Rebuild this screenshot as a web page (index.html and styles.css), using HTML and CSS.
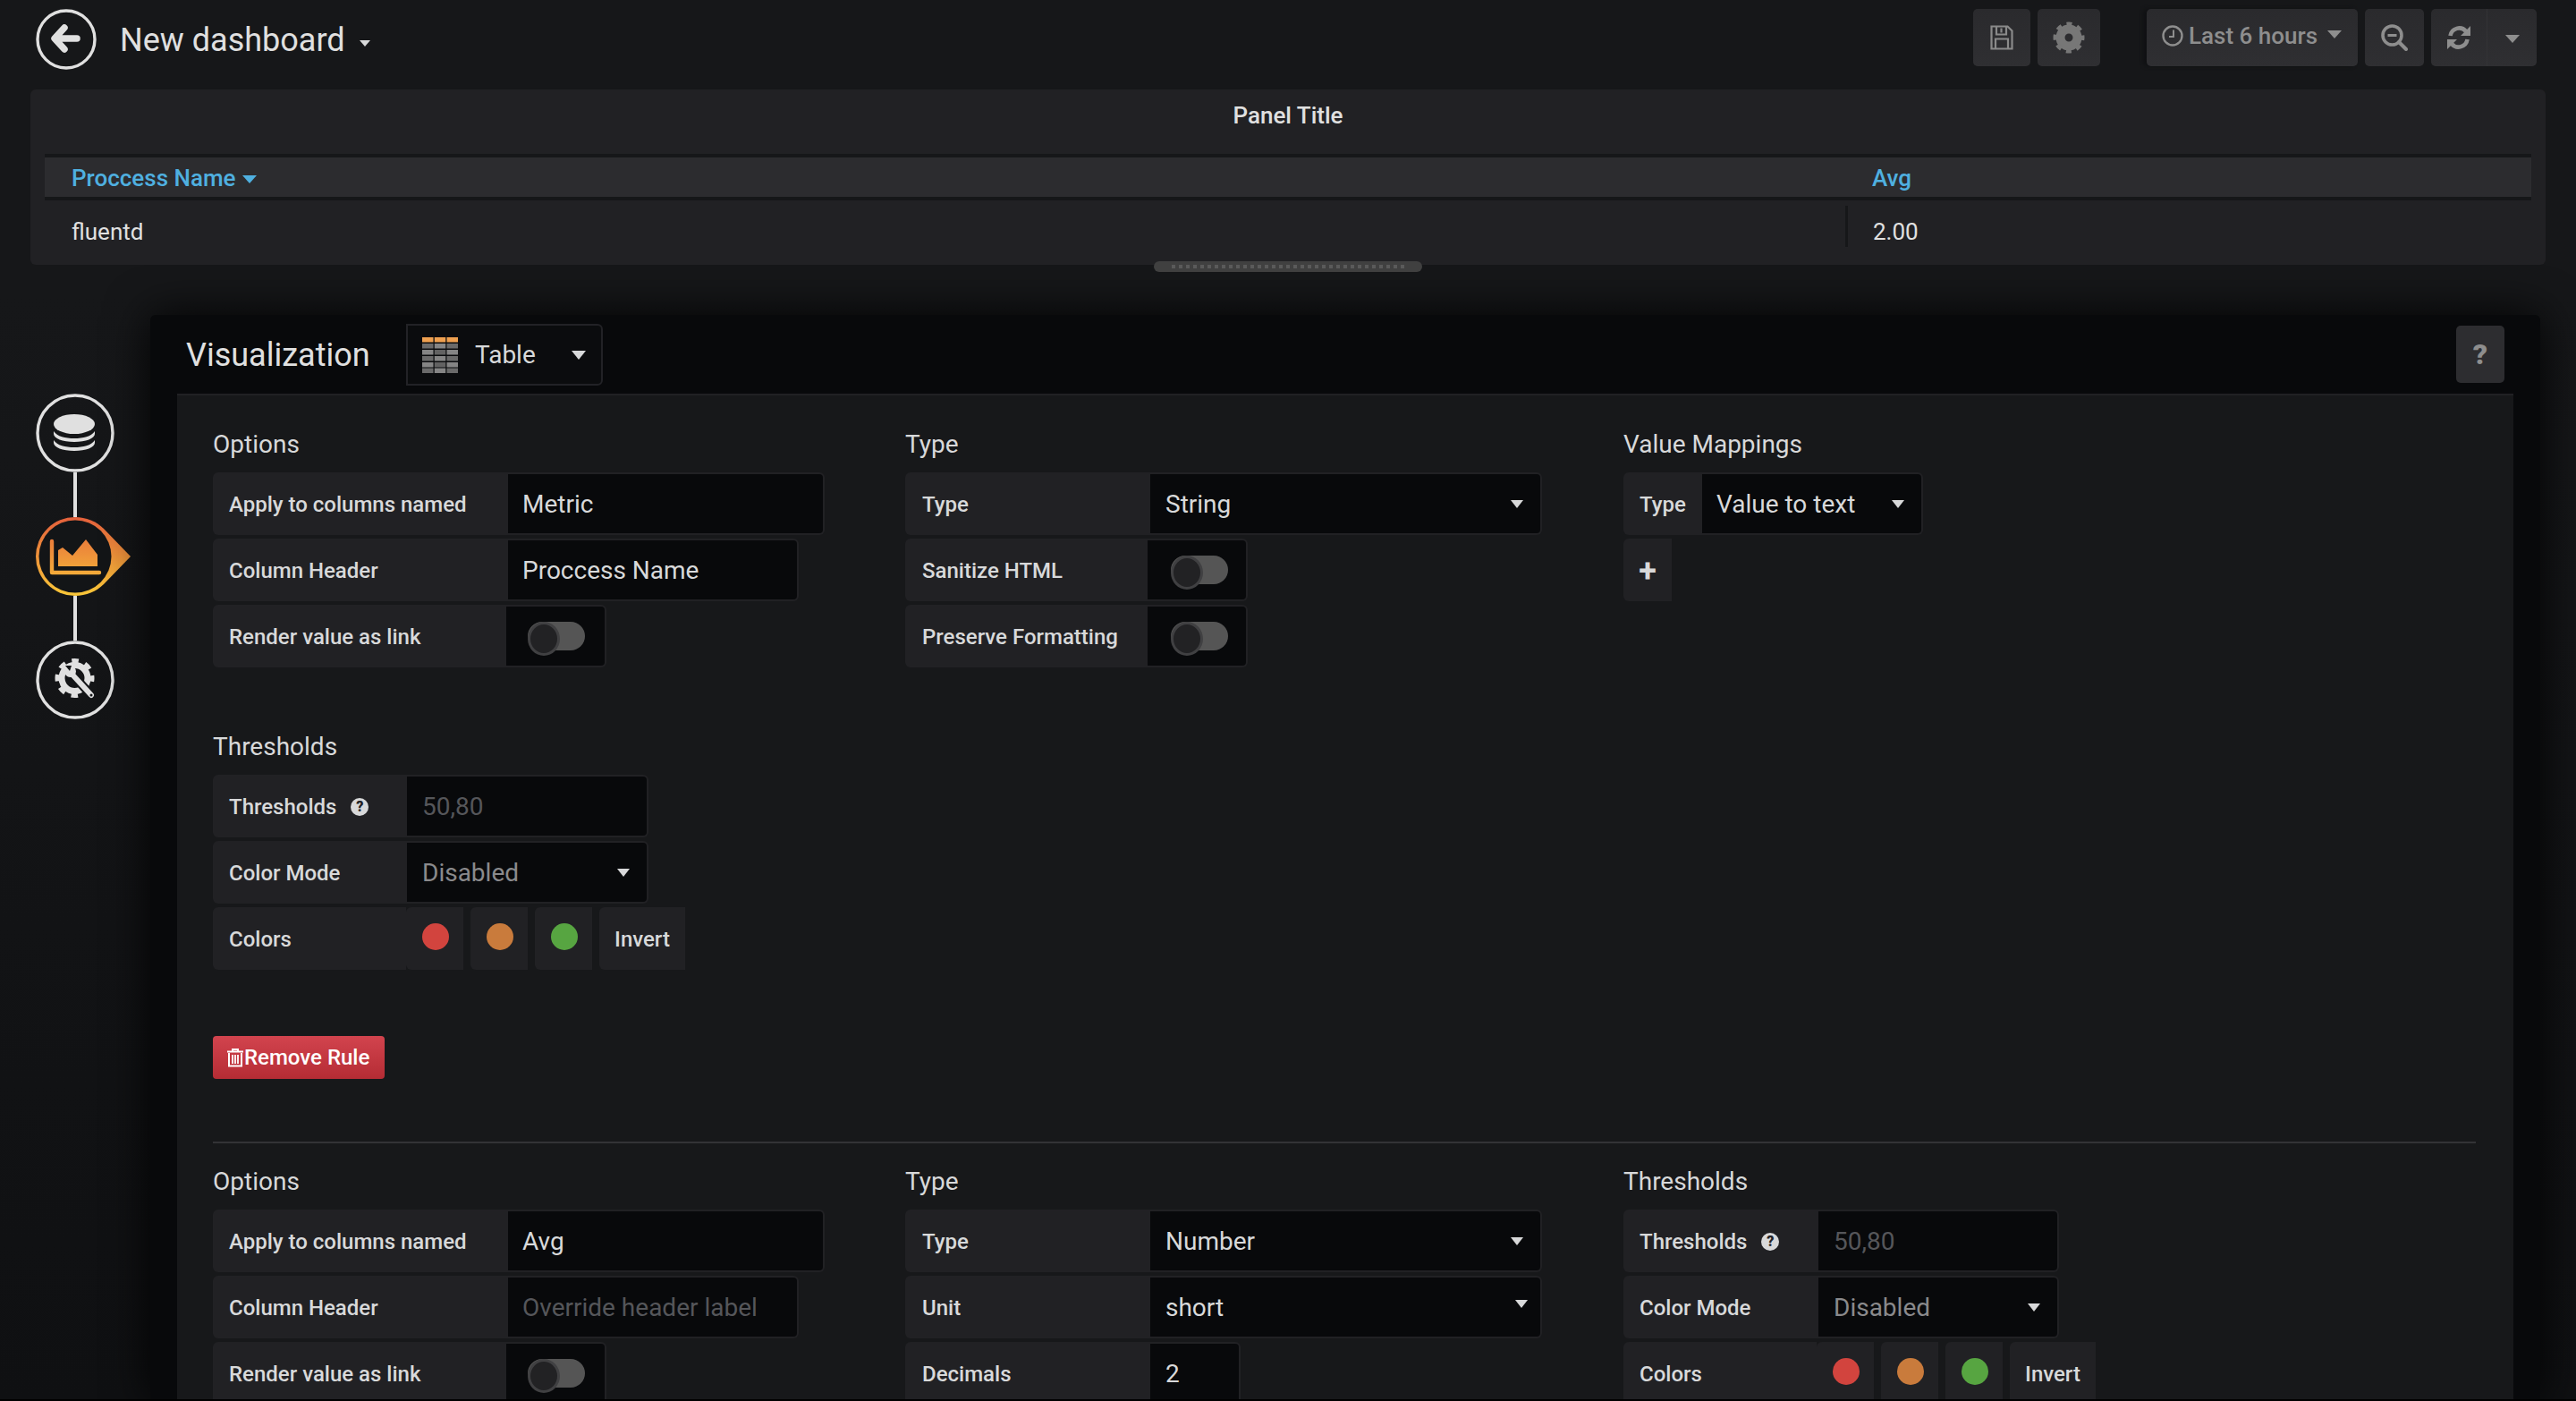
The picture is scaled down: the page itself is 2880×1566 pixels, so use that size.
FILE: index.html
```html
<!DOCTYPE html>
<html lang="en">
<head>
<meta charset="utf-8">
<title>New dashboard</title>
<link rel="stylesheet" href="styles.css">
</head>
<body>
<div class="app">
  <header class="nav">
    <svg class="back" viewBox="0 0 68 68"><circle cx="34" cy="34" r="32" fill="none" stroke="#e0e0e0" stroke-width="3.4"/><path d="M46 33H24M32 21 21 33l11 12" fill="none" stroke="#e0e0e0" stroke-width="7.5" stroke-linecap="round" stroke-linejoin="round"/></svg>
    <div class="dash-title">New dashboard</div>
    <i class="caret caret-title"></i>
    <div class="toolbar">
      <button class="tb tb-save"><svg width="26" height="28" viewBox="0 0 26 28"><path d="M1.5 1.5h18l5 5v20h-23zM7 1.5v9h11v-9M12.5 3.500v5M6 26.500v-11h14v11" fill="none" stroke="#8a8a8a" stroke-width="2.200"/></svg></button>
      <button class="tb tb-gear"><svg width="36" height="36" viewBox="0 0 36 36"><circle cx="18" cy="18" r="9.500" fill="none" stroke="#777" stroke-width="10"/><circle cx="18" cy="18" r="15" fill="none" stroke="#777" stroke-width="5" stroke-dasharray="5.890 5.890" stroke-dashoffset="2.945"/></svg></button>
      <button class="tb tb-time"><svg width="24" height="24" viewBox="0 0 24 24"><circle cx="12" cy="12" r="10.500" fill="none" stroke="#8e8e8e" stroke-width="2.400"/><path d="M13 5.500V13H8" fill="none" stroke="#8e8e8e" stroke-width="2"/></svg><span>Last 6 hours</span><i class="caret caret-time"></i></button>
      <button class="tb tb-zoom"><svg width="30" height="30" viewBox="0 0 30 30"><circle cx="12.500" cy="12.500" r="10.500" fill="none" stroke="#8e8e8e" stroke-width="3.600"/><path d="M20 20l8 8" stroke="#8e8e8e" stroke-width="4" stroke-linecap="round"/><path d="M7.500 12.500h10" stroke="#8e8e8e" stroke-width="3"/></svg></button>
      <div class="tb-group">
        <button class="tb-part tb-refresh"><svg width="28" height="28" viewBox="0 0 28 28"><path d="M4.500 12A10 10 0 0 1 22 7M23.500 16A10 10 0 0 1 6 21" fill="none" stroke="#8e8e8e" stroke-width="4.600"/><path d="M27 1v11H16zM1 27V16h11z" fill="#8e8e8e"/></svg></button>
        <button class="tb-part tb-more"><i class="caret caret-more"></i></button>
      </div>
    </div>
  </header>

  <section class="panel">
    <div class="panel-title">Panel Title</div>
    <div class="tbl">
      <div class="tbl-head">
        <div class="th th-first">Proccess Name<i class="caret caret-sort"></i></div>
        <div class="th">Avg</div>
      </div>
      <div class="tbl-row">
        <div class="td td-first">fluentd</div>
        <div class="td td-val">2.00</div>
      </div>
    </div>
    <div class="handle"><div class="handle-dots"></div></div>
  </section>

  <main class="editor">
    <nav class="steps">
      <svg class="step" width="88" height="88" viewBox="0 0 88 88"><circle cx="44" cy="44" r="42" fill="none" stroke="#e0e0e0" stroke-width="3.400"/><ellipse cx="43" cy="34" rx="23" ry="11" fill="#e0e0e0"/><path d="M20 42c4 6 13 8 23 8s19-2 23-8v3c0 5-10 9-23 9s-23-4-23-9z" fill="#e0e0e0"/><path d="M20 52c4 6 13 8 23 8s19-2 23-8v3c0 5-10 9-23 9s-23-4-23-9z" fill="#e0e0e0"/></svg>
      <div class="link"></div>
      <svg class="step" width="108" height="88" viewBox="0 0 108 88"><defs><linearGradient id="og" gradientUnits="userSpaceOnUse" x1="0" y1="0" x2="0" y2="88"><stop offset="0" stop-color="#e4603c"/><stop offset="1" stop-color="#f9c738"/></linearGradient></defs><path d="M44 0c12 0 24 5 32 13l30 31-30 31c-8 8-20 13-32 13a44 44 0 0 1 0-88z" fill="url(#og)"/><circle cx="44" cy="44" r="40.500" fill="#131517"/><path d="M18 27v35h53" fill="none" stroke="url(#og)" stroke-width="4.400" stroke-linecap="round" stroke-linejoin="round"/><path d="M25 37l5-3 11 9 15-18 13 17v13H25z" fill="url(#og)"/></svg>
      <div class="link"></div>
      <svg class="step" width="88" height="88" viewBox="0 0 88 88"><circle cx="44" cy="44" r="42" fill="none" stroke="#e0e0e0" stroke-width="3.400"/><circle cx="43.500" cy="42" r="14.500" fill="none" stroke="#e0e0e0" stroke-width="7"/><circle cx="43.500" cy="42" r="19.500" fill="none" stroke="#e0e0e0" stroke-width="5" stroke-dasharray="7.650 7.660" stroke-dashoffset="3.830"/><path d="M40 37l22 24" stroke="#131517" stroke-width="10" stroke-linecap="round"/><path d="M40 37l22 24" stroke="#e0e0e0" stroke-width="6" stroke-linecap="round"/><circle cx="38.500" cy="34.500" r="6.500" fill="#e0e0e0"/><path d="M38 34l-5-6h7z" fill="#131517"/><circle cx="62" cy="61" r="1.500" fill="#131517"/></svg>
    </nav>

    <div class="viz">
      <div class="viz-head">
        <h1 class="viz-title">Visualization</h1>
        <button class="viz-picker">
          <svg width="40" height="40" viewBox="0 0 40 40">
            <rect width="12.500" height="5.500" fill="#eea050"/><rect x="13.750" width="12.500" height="5.500" fill="#eea050"/><rect x="27.500" width="12.500" height="5.500" fill="#eea050"/>
            <rect y="7" width="12.500" height="5.500" fill="#6a6a6a"/><rect x="13.750" y="7" width="12.500" height="5.500" fill="#858585"/><rect x="27.500" y="7" width="12.500" height="5.500" fill="#6a6a6a"/>
            <rect y="14" width="12.500" height="5.500" fill="#858585"/><rect x="13.750" y="14" width="12.500" height="5.500" fill="#626262"/><rect x="27.500" y="14" width="12.500" height="5.500" fill="#858585"/>
            <rect y="21" width="12.500" height="5.500" fill="#6a6a6a"/><rect x="13.750" y="21" width="12.500" height="5.500" fill="#858585"/><rect x="27.500" y="21" width="12.500" height="5.500" fill="#6a6a6a"/>
            <rect y="28" width="12.500" height="5.500" fill="#858585"/><rect x="13.750" y="28" width="12.500" height="5.500" fill="#626262"/><rect x="27.500" y="28" width="12.500" height="5.500" fill="#858585"/>
            <rect y="34.500" width="12.500" height="5.500" fill="#6a6a6a"/><rect x="13.750" y="34.500" width="12.500" height="5.500" fill="#858585"/><rect x="27.500" y="34.500" width="12.500" height="5.500" fill="#6a6a6a"/>
          </svg>
          <span>Table</span><i class="caret caret-picker"></i>
        </button>
        <button class="help">?</button>
      </div>

      <div class="viz-body">
        <div class="rule rule-one">
          <div class="col col-a">
            <h2 class="sec">Options</h2>
            <div class="field"><div class="label w-330">Apply to columns named</div><div class="input w-354">Metric</div></div>
            <div class="field"><div class="label w-330">Column Header</div><div class="input w-325">Proccess Name</div></div>
            <div class="field"><div class="label w-328">Render value as link</div><div class="switch-box"><div class="switch"></div></div></div>
          </div>
          <div class="col col-b">
            <h2 class="sec">Type</h2>
            <div class="field"><div class="label w-274">Type</div><div class="input w-438 select">String<i class="caret"></i></div></div>
            <div class="field"><div class="label w-271">Sanitize HTML</div><div class="switch-box"><div class="switch"></div></div></div>
            <div class="field"><div class="label w-271">Preserve Formatting</div><div class="switch-box"><div class="switch"></div></div></div>
          </div>
          <div class="col col-c">
            <h2 class="sec">Value Mappings</h2>
            <div class="field"><div class="label w-88">Type</div><div class="input w-247 select">Value to text<i class="caret"></i></div></div>
            <div class="field"><div class="label plus">+</div></div>
          </div>
        </div>

        <div class="col thresholds-block">
          <h2 class="sec">Thresholds</h2>
          <div class="field"><div class="label w-217">Thresholds<span class="qmark">?</span></div><div class="input w-270 muted">50,80</div></div>
          <div class="field"><div class="label w-217">Color Mode</div><div class="input w-270 select dim">Disabled<i class="caret"></i></div></div>
          <div class="field swatches"><div class="label w-216">Colors</div><div class="swatch"><span class="dot red"></span></div><div class="swatch"><span class="dot orange"></span></div><div class="swatch"><span class="dot green"></span></div><div class="swatch invert">Invert</div></div>
        </div>

        <button class="remove"><svg width="18" height="21" viewBox="0 0 18 21"><path d="M6 3V1h6v2M0 3.500h18M2 5v14.500h14V5" fill="none" stroke="#fff" stroke-width="2"/><path d="M6 7v10M9 7v10M12 7v10" stroke="#fff" stroke-width="1.800"/></svg><span>Remove Rule</span></button>

        <hr class="divider">

        <div class="rule rule-two">
          <div class="col col-a">
            <h2 class="sec">Options</h2>
            <div class="field"><div class="label w-330">Apply to columns named</div><div class="input w-354">Avg</div></div>
            <div class="field"><div class="label w-330">Column Header</div><div class="input w-325 muted">Override header label</div></div>
            <div class="field"><div class="label w-328">Render value as link</div><div class="switch-box"><div class="switch"></div></div></div>
          </div>
          <div class="col col-b">
            <h2 class="sec">Type</h2>
            <div class="field"><div class="label w-274">Type</div><div class="input w-438 select">Number<i class="caret"></i></div></div>
            <div class="field"><div class="label w-274">Unit</div><div class="input w-438 select unit">short<i class="caret"></i></div></div>
            <div class="field"><div class="label w-274">Decimals</div><div class="input w-101">2</div></div>
          </div>
          <div class="col">
            <h2 class="sec">Thresholds</h2>
            <div class="field"><div class="label w-218">Thresholds<span class="qmark">?</span></div><div class="input w-269 muted">50,80</div></div>
            <div class="field"><div class="label w-218">Color Mode</div><div class="input w-269 select dim">Disabled<i class="caret"></i></div></div>
            <div class="field swatches"><div class="label w-216">Colors</div><div class="swatch"><span class="dot red"></span></div><div class="swatch"><span class="dot orange"></span></div><div class="swatch"><span class="dot green"></span></div><div class="swatch invert">Invert</div></div>
          </div>
        </div>
      </div>
    </div>
  </main>
</div>
</body>
</html>
```
FILE: styles.css
```css
* { box-sizing: border-box; }
html, body { margin: 0; height: 1566px; background: #000; overflow: hidden; }
body { font-family: Roboto, "Liberation Sans", sans-serif; color: #d8d9da; }
button { font: inherit; color: inherit; border: 0; padding: 0; background: none; }
.app { height: 1564px; overflow: hidden; background: linear-gradient(#161719 0, #161719 330px, #0f1012 100%); }

.caret { display: inline-block; width: 0; height: 0; border-style: solid; border-color: #d8d9da transparent transparent; border-width: 9px 7px 0; }

/* top bar */
.nav { display: flex; align-items: flex-start; height: 100px; padding: 10px 44px 0 40px; }
.back { width: 68px; height: 68px; flex: none; }
.dash-title { font-size: 36px; line-height: 71px; margin-left: 26px; color: #e0e0e0; }
.caret-title { margin: 35px 0 0 16px; border-width: 7px 6px 0; }
.toolbar { display: flex; gap: 8px; margin-left: auto; height: 64px; }
.tb, .tb-group { display: flex; align-items: center; justify-content: center; height: 64px; border-radius: 5px; background: linear-gradient(#2a2a2d, #2f2f32); color: #8e8e8e; }
.tb-save { width: 64px; }
.tb-gear { width: 70px; }
.tb-time { width: 236px; margin-left: 44px; font-size: 26px; font-weight: 500; justify-content: flex-start; padding: 0 0 4px 17px; box-shadow: -4px 0 4px #101113; }
.tb-time span { margin-left: 6px; }
.caret-time { border-top-color: #8e8e8e; border-width: 9px 8px 0; margin: 0 0 4px 11px; }
.tb-zoom { width: 66px; }
.tb-group { width: 118px; }
.tb-part { display: flex; align-items: center; justify-content: center; height: 64px; }
.tb-refresh { width: 63px; border-right: 1px solid #333336; }
.tb-more { width: 55px; }
.caret-more { border-top-color: #8e8e8e; border-width: 9px 8px 0; margin-top: 3px; }

/* panel with the table */
.panel { position: relative; height: 196px; margin: 0 34px; background: #212124; border-radius: 6px; }
.panel-title { height: 72px; padding-top: 11px; font-size: 26px; font-weight: 500; line-height: 36px; text-align: center; color: #e0e0e0; }
.tbl { margin: 0 16px; }
.tbl-head { display: flex; height: 52px; background: #2c2c2f; border-top: 4px solid #161719; border-bottom: 4px solid #161719; }
.th { font-size: 26px; font-weight: 500; line-height: 47px; color: #4fb0e0; padding-left: 30px; }
.th-first, .td-first { width: 2013px; }
.caret-sort { border-top-color: #4fb0e0; border-width: 9px 8px 0; margin: 0 0 3px 7px; }
.tbl-row { display: flex; margin-top: 6px; height: 46px; }
.td { font-size: 26px; line-height: 58px; padding-left: 30px; color: #e0e0e0; }
.td-val { border-left: 3px solid #161719; height: 46px; padding-left: 28px; }
.handle { position: absolute; left: 1256px; top: 192px; width: 300px; height: 12px; padding: 4px 20px; background: #404040; border-radius: 6px; }
.handle-dots { height: 4px; background: repeating-linear-gradient(90deg, #5a5a5a 0 4px, transparent 4px 8px); }

/* editor */
.editor { display: flex; margin-top: 56px; height: 1212px; }
.steps { flex: none; display: flex; flex-direction: column; width: 168px; padding: 88px 0 0 40px; }
.step { flex: none; }
.link { width: 4px; height: 50px; margin-left: 42px; background: #e0e0e0; }
.viz { flex: none; width: 2672px; padding: 0 30px; background: #08090b; border-radius: 6px 6px 0 0; box-shadow: 0 0 50px rgba(0, 0, 0, .9); }
.viz-head { display: flex; align-items: flex-start; height: 88px; padding: 10px 10px 0 10px; }
.viz-title { margin: 0; font-size: 36px; font-weight: 400; line-height: 70px; color: #e0e0e0; width: 246px; }
.viz-picker { display: flex; align-items: center; width: 220px; height: 69px; padding-left: 16px; background: #0b0c0e; border: 2px solid #222226; border-radius: 0 6px 6px 0; font-size: 28px; color: #d8d9da; }
.viz-picker span { margin-left: 19px; }
.caret-picker { margin-left: 40px; border-width: 10px 8px 0; }
.help { width: 54px; height: 64px; margin: 2px 0 0 auto; background: #2d2d30; border-radius: 5px; font-size: 32px; font-weight: 900; color: #8e8e8e; }
.viz-body { height: 1124px; padding: 0 42px 0 40px; background: #17181a; border-top: 2px solid #212124; }

.rule { display: grid; }
.rule-one, .rule-two { grid-template-columns: 774px 803px auto; }
.rule-one { padding-top: 38px; }
.rule-two { padding-top: 26px; }
.sec { margin: 0 0 15px; font-size: 28px; font-weight: 400; line-height: 33px; color: #d8d9da; }
.field { display: flex; height: 70px; margin-bottom: 4px; }
.label { display: flex; align-items: center; flex: none; padding: 1px 0 0 18px; background: #212124; border-radius: 6px 0 0 6px; font-size: 24px; font-weight: 500; color: #d8d9da; }
.input { display: flex; align-items: center; flex: none; padding: 1px 0 0 17px; background: #08090b; border: 2px solid #212124; border-left: 0; border-radius: 0 6px 6px 0; font-size: 28px; color: #d8d9da; }
.col-a .input { padding-left: 16px; }
.col-b .label { padding-left: 19px; }
.col-c .input { padding-left: 16px; }
.select { position: relative; justify-content: space-between; padding-right: 19px; }
.select .caret { border-width: 9px 7px 0; }
.unit { padding-right: 14px; }
.unit .caret { margin-bottom: 8px; }
.muted { color: #55565a; }
.dim { color: #8a8a8c; }
.w-88 { width: 88px; }
.w-101 { width: 101px; }
.w-216 { width: 216px; }
.w-217 { width: 217px; }
.w-218 { width: 218px; }
.w-247 { width: 247px; }
.w-269 { width: 269px; }
.w-270 { width: 270px; }
.w-271 { width: 271px; }
.w-274 { width: 274px; }
.w-325 { width: 325px; }
.w-328 { width: 328px; }
.w-330 { width: 330px; }
.w-354 { width: 354px; }
.w-438 { width: 438px; }
.plus { width: 54px; padding-left: 0; justify-content: center; font-size: 36px; font-weight: 700; }
.switch-box { display: flex; align-items: center; flex: none; width: 112px; padding-left: 24px; background: #08090b; border: 2px solid #212124; border-left: 0; border-radius: 0 6px 6px 0; }
.col-b .switch-box { padding-left: 26px; }
.switch { position: relative; width: 64px; height: 32px; border-radius: 16px; background: #555; }
.switch::before { content: ""; position: absolute; left: 0; top: 0; width: 30px; height: 32px; border-radius: 50%; background: #222224; border: 3px solid #404042; }
.qmark { display: flex; align-items: center; justify-content: center; width: 20px; height: 20px; margin-left: 16px; border-radius: 50%; background: #d8d9da; color: #212124; font-size: 16px; font-weight: 900; }
.swatches { gap: 8px; }
.swatches .label { margin-right: -8px; }
.swatch { display: flex; align-items: flex-start; justify-content: center; flex: none; width: 64px; padding: 18px 0 0 2px; background: #212124; border-radius: 6px 0 0 6px; }
.dot { width: 30px; height: 30px; border-radius: 50%; }
.red { background: #d2443e; }
.orange { background: #c97b3c; }
.green { background: #57a541; }
.invert { align-items: center; width: 96px; padding: 1px 0 0; font-size: 24px; font-weight: 500; }
.thresholds-block { padding-top: 68px; }
.remove { display: flex; align-items: center; width: 192px; height: 48px; margin-top: 74px; padding-left: 16px; background: linear-gradient(#d2444e, #b52c34); border-radius: 4px; font-size: 24px; font-weight: 500; color: #fff; }
.remove span { margin-left: 1px; }
.divider { height: 2px; margin: 70px 0 0; border: 0; background: #333336; }
```
